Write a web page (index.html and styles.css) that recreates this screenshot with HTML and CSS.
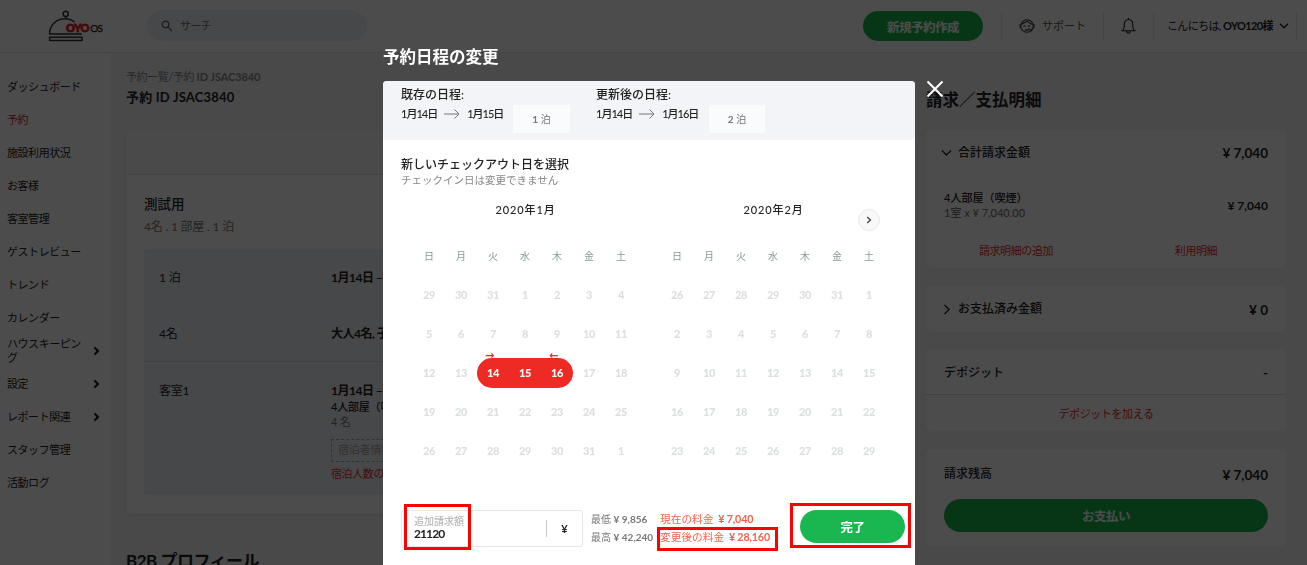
FILE: index.html
```
<!DOCTYPE html>
<html lang="ja">
<head>
    <meta charset="UTF-8">
    <meta name="viewport" content="width=device-width, initial-scale=1.0">
    <title>OYO OS</title>
    <link rel="stylesheet" href="styles.css">
</head>
<body>
    <header class="header">
        <div class="logo">
            <svg width="36" height="32" viewBox="0 0 36 32" fill="none" stroke="#333" stroke-width="1.5">
                <circle cx="17.7" cy="3.8" r="2.6"/>
                <path d="M17.7 6.4v2.4M1.6 24C1.6 15 8.500 8.800 17 8.800c4 0 7 1.200 9.500 3.200M1 24h33M1.600 27.200h32.400v3.200H1.600z"/>
            </svg>
            <span class="logo-oyo">OYO</span><span class="logo-os">OS</span>
        </div>
        <div class="search">
            <svg width="12" height="12" viewBox="0 0 12 12" fill="none" stroke="#666" stroke-width="1.300"><circle cx="4.500" cy="4.500" r="3.300"/><path d="M7 7l4 4"/></svg>
            <span>サーチ</span>
        </div>
        <button class="btn new-booking">新規予約作成</button>
        <div class="header-item support">
            <svg width="16" height="16" viewBox="0 0 16 16" fill="none" stroke="#333" stroke-width="1.100">
                <circle cx="8" cy="8" r="6.300"/><path d="M2.300 6.500C5 5 7 4 8.500 3.200c1 1.600 3 2.600 5.200 3.200M4.500 8.500q1-1.500 2 0M9 8.500q1-1.500 2 0M6 11.500q2.500 1.500 5-1M1 6v4M15 6v4M11 13l3-2.500"/>
            </svg>
            <span>サポート</span>
        </div>
        <div class="header-item bell">
            <svg width="15" height="18" viewBox="0 0 15 18" fill="none" stroke="#222" stroke-width="1.100"><path d="M7.500 1v1.500M1.200 13.700h12.600c-1.400-1-2-2.300-2-4V7.500c0-2.800-1.700-5-4.300-5s-4.300 2.200-4.300 5v2.200c0 1.700-.6 3-2 4zM5.700 14c0 3 3.600 3 3.600 0"/></svg>
        </div>
        <div class="header-item user">
            <span>こんにちは, <b>OYO120様</b></span>
            <svg width="10" height="6" viewBox="0 0 10 6" fill="none" stroke="#222" stroke-width="1.400"><path d="M1 .8l4 4 4-4"/></svg>
        </div>
    </header>

    <div class="page">
        <nav class="sidebar">
            <a>ダッシュボード</a>
            <a class="active">予約</a>
            <a>施設利用状況</a>
            <a>お客様</a>
            <a>客室管理</a>
            <a>ゲストレビュー</a>
            <a>トレンド</a>
            <a>カレンダー</a>
            <a class="more"><span>ハウスキーピング</span><svg width="7" height="10" viewBox="0 0 7 10"><path d="M1.500 1.500L5 5 1.500 8.500"/></svg></a>
            <a class="more"><span>設定</span><svg width="7" height="10" viewBox="0 0 7 10"><path d="M1.500 1.500L5 5 1.500 8.500"/></svg></a>
            <a class="more"><span>レポート関連</span><svg width="7" height="10" viewBox="0 0 7 10"><path d="M1.500 1.500L5 5 1.500 8.500"/></svg></a>
            <a>スタッフ管理</a>
            <a>活動ログ</a>
        </nav>

        <main class="booking">
            <div class="breadcrumb">予約一覧/予約 <b>ID JSAC3840</b></div>
            <h1>予約 ID JSAC3840</h1>
            <section class="booking-card">
                <div class="booking-status"></div>
                <div class="booking-body">
                    <h2>測試用</h2>
                    <p class="summary">4名 . 1 部屋 . 1 泊</p>
                    <div class="details">
                        <div class="detail-row">
                            <span>1 泊</span>
                            <b>1月14日 – 1月15日</b>
                        </div>
                        <div class="detail-row guests">
                            <span>4名</span>
                            <b>大人4名, 子供0名</b>
                        </div>
                        <div class="detail-row room">
                            <span>客室1</span>
                            <div>
                                <b>1月14日 – 1月15日</b>
                                <div class="room-type">4人部屋（喫煙）</div>
                                <div class="room-guests">4 名</div>
                                <div class="guest-info">宿泊者情報</div>
                                <a class="guest-edit">宿泊人数の変更</a>
                            </div>
                        </div>
                    </div>
                </div>
            </section>
            <h3>B2B プロフィール</h3>
        </main>

        <aside class="billing">
            <h2>請求／支払明細</h2>
            <section class="bill-card total">
                <div class="bill-head">
                    <svg width="11" height="11" viewBox="0 0 11 11"><path d="M1 3.500l4.500 4.500L10 3.500"/></svg>
                    <span>合計請求金額</span>
                    <b>¥ 7,040</b>
                </div>
                <div class="bill-line">
                    <div>4人部屋（喫煙）<small>1室 x ¥ 7,040.00</small></div>
                    <b>¥ 7,040</b>
                </div>
                <div class="bill-links"><a>請求明細の追加</a><a>利用明細</a></div>
            </section>
            <section class="bill-card paid">
                <div class="bill-head">
                    <svg width="11" height="11" viewBox="0 0 11 11"><path d="M3.500 1l4.500 4.500L3.500 10"/></svg>
                    <span>お支払済み金額</span>
                    <b>¥ 0</b>
                </div>
            </section>
            <section class="bill-card deposit">
                <div class="bill-head"><span>デポジット</span><b>-</b></div>
                <a>デポジットを加える</a>
            </section>
            <section class="bill-card balance">
                <div class="bill-head"><span>請求残高</span><b>¥ 7,040</b></div>
                <button class="btn">お支払い</button>
            </section>
        </aside>
    </div>

    <div class="overlay">
        <div class="dialog">
            <h2 class="dialog-title">予約日程の変更</h2>
            <svg class="close" width="18" height="18" viewBox="0 0 18 18"><path d="M1.500 1.500l15 15M16.500 1.500l-15 15"/></svg>
            <div class="modal">
                <div class="dates">
                    <div class="date-group">
                        <h4>既存の日程:</h4>
                        <div class="date-range">
                            <span>1月14日</span>
                            <svg width="16" height="10" viewBox="0 0 16 10"><path d="M0 5h15M10.500 .5L15 5l-4.500 4.500"/></svg>
                            <span>1月15日</span>
                        </div>
                        <div class="nights"><b>1</b> 泊</div>
                    </div>
                    <div class="date-group">
                        <h4>更新後の日程:</h4>
                        <div class="date-range">
                            <span>1月14日</span>
                            <svg width="16" height="10" viewBox="0 0 16 10"><path d="M0 5h15M10.500 .5L15 5l-4.500 4.500"/></svg>
                            <span>1月16日</span>
                        </div>
                        <div class="nights"><b>2</b> 泊</div>
                    </div>
                </div>
                <div class="modal-body">
                    <h3>新しいチェックアウト日を選択</h3>
                    <p>チェックイン日は変更できません</p>
                    <div class="calendars">
                        <div class="month">
                            <div class="month-name">2020年1月</div>
                            <div class="days" id="january"></div>
                        </div>
                        <div class="month">
                            <div class="month-name">2020年2月</div>
                            <div class="days" id="february"></div>
                        </div>
                        <button class="next"><svg width="6" height="8" viewBox="0 0 6 8"><path d="M1.200 1L4.500 4 1.200 7"/></svg></button>
                    </div>
                </div>
                <div class="modal-footer">
                    <div class="charge">
                        <div class="charge-field"><label>追加請求額</label><b>21120</b></div>
                        <span class="currency">¥</span>
                        <i class="mark mark-charge"></i>
                    </div>
                    <div class="limits"><div>最低 <b>¥ 9,856</b></div><div>最高 <b>¥ 42,240</b></div></div>
                    <div class="prices">
                        <div>現在の料金 <b>¥ 7,040</b></div>
                        <div>変更後の料金 <b>¥ 28,160</b></div>
                        <i class="mark mark-price"></i>
                    </div>
                    <div class="submit">
                        <button class="btn">完了</button>
                        <i class="mark mark-submit"></i>
                    </div>
                </div>
            </div>
        </div>
    </div>

    <script>
        const weekdays = ['日', '月', '火', '水', '木', '金', '土'];

        // fills five weeks, starting with the last days of the previous month
        function drawMonth(id, first, prevLength, length, selected) {
            const grid = document.getElementById(id);
            weekdays.forEach(name => addCell(grid, name, 'weekday'));
            let day = first;
            let limit = prevLength;
            let current = false;
            for (let i = 0; i < 35; i++) {
                let cls = 'day';
                if (current && selected.includes(day)) {
                    cls += ' selected';
                    if (day === selected[0]) cls += ' start';
                    if (day === selected[selected.length - 1]) cls += ' end';
                }
                addCell(grid, day, cls);
                day++;
                if (day > limit) {
                    day = 1;
                    limit = length;
                    current = true;
                }
            }
        }

        function addCell(grid, text, cls) {
            const cell = document.createElement('span');
            cell.className = cls;
            cell.textContent = text;
            grid.appendChild(cell);
        }

        drawMonth('january', 29, 31, 31, [14, 15, 16]);
        drawMonth('february', 26, 31, 29, []);
    </script>
</body>
</html>
```
FILE: styles.css
```
* {
    box-sizing: border-box;
}
body {
    margin: 0;
    height: 565px;
    overflow: hidden;
    background: #f3f5f7;
    color: #222;
    font-family: Lato, "Noto Sans CJK JP", sans-serif;
    font-size: 11px;
    line-height: 16px;
}
h1, h2, h3, h4, p {
    margin: 0;
}
button {
    padding: 0;
    border: none;
    font-family: inherit;
}
.btn {
    border-radius: 20px;
    background: #1ab64f;
    color: #fff;
    font-size: 12.5px;
    font-weight: bold;
    letter-spacing: -0.5px;
}

/* header */
.header {
    display: flex;
    align-items: center;
    height: 53px;
    padding: 0 10px 0 48px;
    background: #fff;
    border-bottom: 1px solid #e6e8ea;
}
.logo {
    display: flex;
    align-items: center;
    width: 99px;
}
.logo svg {
    flex: none;
    margin-right: -18px;
}
.logo-oyo {
    padding-top: 3px;
    font-size: 11px;
    font-weight: 900;
    letter-spacing: -0.3px;
    color: #e02020;
    -webkit-text-stroke: 0.8px #e02020;
}
.logo-os {
    padding-top: 3px;
    margin-left: 1px;
    font-size: 10px;
    letter-spacing: -0.8px;
    color: #222;
    -webkit-text-stroke: 0.3px #222;
}
.search {
    display: flex;
    align-items: center;
    gap: 7px;
    width: 220px;
    height: 30px;
    padding-left: 14px;
    border-radius: 15px;
    background: #eef1f6;
    color: #777;
    letter-spacing: -0.6px;
}
.new-booking {
    width: 120px;
    height: 30px;
    margin: 0 18px 0 auto;
}
.header-item {
    display: flex;
    align-items: center;
    justify-content: center;
    height: 28px;
    border-left: 1px solid #e8e8e8;
}
.support {
    gap: 7px;
    width: 102px;
    color: #555;
}
.bell {
    width: 50px;
}
.user {
    gap: 6px;
    justify-content: flex-end;
    width: 144px;
    padding-right: 7px;
    border-right: 1px solid #e8e8e8;
    letter-spacing: -0.6px;
}

/* sidebar */
.page {
    display: flex;
    height: 512px;
}
.sidebar {
    flex: none;
    width: 111px;
    padding-top: 17px;
    background: #fff;
    line-height: 14px;
    letter-spacing: -0.45px;
}
.sidebar a {
    display: flex;
    align-items: center;
    height: 33px;
    padding-left: 7px;
}
.sidebar .active {
    color: #e02020;
}
.sidebar .more {
    justify-content: space-between;
    padding-right: 11px;
}
.more span {
    width: 76px;
}
.more path {
    fill: none;
    stroke: #111;
    stroke-width: 2;
}

/* booking */
.booking {
    flex: none;
    width: 790px;
    padding: 16px 0 0 15px;
}
.breadcrumb {
    color: #888;
    letter-spacing: -0.4px;
}
.breadcrumb b {
    letter-spacing: -0.1px;
}
h1 {
    margin-top: 4px;
    font-size: 13px;
    line-height: 17px;
    letter-spacing: 0.2px;
}
.booking-card {
    margin-top: 24px;
    height: 384px;
    border-radius: 5px;
    background: #fff;
    box-shadow: 0 1px 3px rgba(0, 0, 0, 0.1);
}
.booking-status {
    height: 45px;
    background: #f4f8f6;
    border-bottom: 1px solid #dfe3e5;
}
.booking-body {
    padding: 18px;
}
.booking-body h2 {
    font-size: 13.5px;
    line-height: 22px;
    font-weight: 500;
}
.summary {
    margin: 4px 0 14px;
    color: #777;
    font-size: 12px;
    letter-spacing: -0.2px;
}
.details {
    height: 246px;
    border-radius: 4px;
    background: #eef1f5;
}
.detail-row {
    display: grid;
    grid-template-columns: 172px 1fr;
    height: 56px;
    padding: 21px 15px 0;
    font-size: 12px;
    letter-spacing: -0.2px;
}
.detail-row b {
    letter-spacing: -0.5px;
}
.detail-row.room {
    height: 133px;
    padding-top: 21px;
    border-top: 1px solid #d5d9dd;
}
.room-type {
    font-size: 11px;
    font-weight: 500;
}
.room-guests {
    color: #777;
    font-size: 11px;
    line-height: 14px;
}
.guest-info {
    width: 140px;
    height: 23px;
    margin: 10px 0 4px;
    padding: 2px 6px;
    border: 1px dashed #aaa;
    color: #aaa;
    font-size: 11px;
}
.guest-edit {
    color: #ee2a24;
    font-size: 11px;
    letter-spacing: -0.4px;
}
.booking > h3 {
    margin-top: 34px;
    font-size: 17px;
    line-height: 26px;
    letter-spacing: -0.5px;
}

/* billing */
.billing {
    flex: none;
    width: 385px;
    padding: 35px 0 0 25px;
}
.billing h2 {
    font-size: 16.5px;
    line-height: 24px;
}
.bill-card {
    width: 360px;
    margin-bottom: 18px;
    padding: 0 18px;
    border-radius: 5px;
    background: #fff;
}
.bill-head {
    display: flex;
    align-items: center;
    height: 45px;
    font-size: 12px;
    font-weight: 500;
}
.bill-head svg {
    margin: 0 6px 0 -3px;
    fill: none;
    stroke: #222;
    stroke-width: 1.3;
}
.bill-head b {
    margin-left: auto;
    padding-top: 1px;
    font-size: 13.5px;
}
.total {
    height: 138px;
    margin-top: 18px;
}
.bill-line {
    display: flex;
    align-items: center;
    justify-content: space-between;
    height: 60px;
    font-weight: 500;
}
.bill-line small {
    display: block;
    color: #777;
    font-size: 11px;
    line-height: 14px;
}
.bill-line b {
    padding-top: 1px;
    font-size: 12px;
}
.bill-links {
    display: flex;
    padding-top: 8px;
    letter-spacing: -0.4px;
}
.bill-links a {
    flex: none;
    width: 144px;
    text-align: center;
}
.bill-links a:last-child {
    width: 216px;
}
.bill-card a {
    color: #ee2a24;
}
.paid .bill-head {
    height: 46px;
    margin-bottom: -1px;
}
.deposit {
    height: 82px;
    padding: 0;
}
.deposit .bill-head {
    height: 46px;
    padding: 2px 18px 0;
    border-bottom: 1px solid #ddd;
}
.deposit a {
    display: block;
    padding-top: 11px;
    text-align: center;
    letter-spacing: -0.4px;
}
.balance {
    height: 97px;
    margin-bottom: 0;
}
.balance .bill-head {
    height: 50px;
}
.balance .btn {
    width: 100%;
    height: 33px;
}

/* date change dialog */
.overlay {
    position: fixed;
    inset: 0;
    padding: 45px 0 0 383px;
    background: rgba(0, 0, 0, 0.7);
}
.dialog {
    position: relative;
    width: 532px;
}
.dialog-title {
    height: 36px;
    color: #fff;
    font-size: 16.5px;
    line-height: 25px;
}
.close {
    position: absolute;
    top: 35px;
    left: 543px;
    fill: none;
    stroke: #fff;
    stroke-width: 2;
}
.modal {
    height: 500px;
    border-radius: 4px;
    background: #fff;
}
.dates {
    display: flex;
    gap: 26px;
    height: 59px;
    padding: 5px 18px 0;
    border-radius: 4px;
    background: #f3f4f7;
}
.date-group {
    display: grid;
    grid-template-columns: 112px 57px;
    grid-template-rows: 19px 28px;
}
.date-group + .date-group {
    grid-template-columns: 113px 56px;
}
.date-group h4 {
    grid-column: 1 / 3;
    font-size: 12px;
    line-height: 18px;
    font-weight: 500;
}
.date-range {
    display: flex;
    align-items: center;
    gap: 7px;
    height: 18px;
    font-weight: 500;
    letter-spacing: -1px;
}
.date-range svg, .next svg {
    fill: none;
    stroke: #777;
}
.nights {
    background: #fafbfd;
    color: #777;
    font-size: 10px;
    line-height: 28px;
    text-align: center;
}
.modal-body {
    height: 370px;
    padding: 16px 18px 0;
}
.modal-body h3 {
    font-size: 12px;
    line-height: 18px;
    font-weight: 500;
}
.modal-body p {
    color: #888;
    font-size: 10.5px;
    line-height: 12px;
}
.calendars {
    position: relative;
    display: flex;
    gap: 24px;
    padding: 15px 12px 0;
}
.month {
    width: 224px;
}
.month-name {
    padding-left: 1px;
    line-height: 18px;
    text-align: center;
    letter-spacing: 0.9px;
    font-weight: 500;
}
.days {
    display: grid;
    grid-template-columns: repeat(7, 32px);
    grid-auto-rows: 30px;
    row-gap: 9px;
    margin-top: 22px;
    line-height: 30px;
    text-align: center;
}
.weekday {
    color: #899;
    font-size: 10px;
}
.day {
    position: relative;
    color: #dcdfe0;
    font-weight: 900;
    letter-spacing: -0.3px;
}
.selected {
    background: #ee2a24;
    color: #fff;
}
.start {
    border-radius: 15px 0 0 15px;
}
.end {
    border-radius: 0 15px 15px 0;
}
.start::before, .end::before {
    position: absolute;
    top: -8px;
    left: 8px;
    color: #ee2a24;
    font-family: "DejaVu Sans";
    font-size: 11px;
    font-weight: bold;
    line-height: 11px;
    content: "→";
}
.end::before {
    content: "←";
}
.next {
    position: absolute;
    top: 23px;
    right: 17px;
    display: flex;
    align-items: center;
    justify-content: center;
    width: 22px;
    height: 22px;
    border: 1px solid #e8e8e8;
    border-radius: 50%;
    background: #f8f8f8;
}
.next svg {
    stroke: #444;
    stroke-width: 1.3;
}
.modal-footer {
    display: flex;
    padding-left: 18px;
}
.charge {
    position: relative;
    display: flex;
    align-items: center;
    width: 182px;
    height: 37px;
    border: 1px solid #e8e8e8;
    border-radius: 3px;
}
.charge-field {
    width: 145px;
    padding-left: 12px;
    border-right: 1px solid #ccc;
    height: 17px;
}
.charge-field label {
    display: block;
    margin-top: -6px;
    color: #aaa;
    font-size: 10px;
    line-height: 14px;
}
.charge-field b {
    display: block;
    font-size: 12px;
    line-height: 11px;
    letter-spacing: -0.9px;
}
.currency {
    flex: 1;
    text-align: center;
    font-weight: bold;
}
.limits {
    width: 77px;
    padding-left: 8px;
    color: #777;
    font-size: 10px;
    line-height: 18px;
    white-space: nowrap;
}
.prices {
    position: relative;
    width: 140px;
    color: #f0624d;
    font-size: 10.7px;
    line-height: 18px;
    white-space: nowrap;
}
.prices b {
    margin-left: 2px;
    letter-spacing: -0.15px;
}
.submit {
    position: relative;
}
.submit .btn {
    width: 105px;
    height: 33px;
}
/* red highlight frames */
.mark {
    position: absolute;
    border: 3px solid #f00;
}
.mark-charge {
    top: -7px;
    left: 2px;
    width: 67px;
    height: 46px;
}
.mark-price {
    top: 17px;
    left: -3px;
    width: 121px;
    height: 24px;
}
.mark-submit {
    top: -7px;
    left: -10px;
    width: 121px;
    height: 45px;
}
```
